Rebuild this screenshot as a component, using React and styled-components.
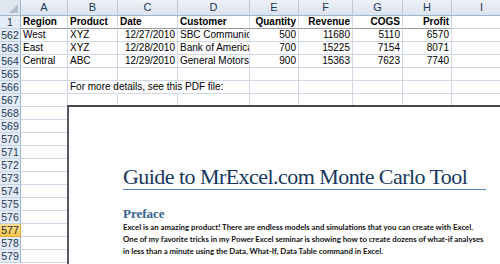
import React from 'react';
import styled, { createGlobalStyle, css } from 'styled-components';

const GlobalStyle = createGlobalStyle`
  html, body {
    margin: 0;
    padding: 0;
    background: #ffffff;
    overflow: hidden;
  }
`;

const Sheet = styled.div`
  position: relative;
  width: 500px;
  height: 264px;
  overflow: hidden;
  font-family: 'Liberation Sans', Arial, sans-serif;
  background: #ffffff;
`;

const Grid = styled.div`
  display: grid;
  grid-template-columns: 21px 47px 50px 60px 72px 49px 54px 50px 49px 60px;
  grid-template-rows: 16px repeat(19, 13px);
`;

const Corner = styled.div`
  position: relative;
  box-sizing: border-box;
  background: #dfe6ef;
  border-right: 1px solid #9eb6ce;
  border-bottom: 1px solid #9eb6ce;

  &::after {
    content: '';
    position: absolute;
    right: 2px;
    bottom: 2px;
    border-left: 9px solid transparent;
    border-bottom: 9px solid #b6c1cf;
  }
`;

const ColHeader = styled.div`
  box-sizing: border-box;
  background: linear-gradient(#eef2f7, #dbe3ee);
  border-right: 1px solid #b8c8da;
  border-bottom: 1px solid #9eb6ce;
  color: #1f3756;
  font-size: 11px;
  line-height: 15px;
  text-align: center;
`;

const RowHeader = styled.div`
  box-sizing: border-box;
  background: #e4ecf7;
  border-right: 1px solid #9eb6ce;
  border-bottom: 1px solid #c5d3e3;
  color: #1f3756;
  font-size: 10.5px;
  line-height: 12px;
  text-align: center;

  ${(p) =>
    p.$active &&
    css`
      background: linear-gradient(#fbe29a, #f6c54a);
      border-right: 1px solid #e0a83a;
      border-bottom: 1px solid #e0a83a;
      color: #2a2a2a;
    `}
`;

const Cell = styled.div`
  box-sizing: border-box;
  padding: 0 2px;
  font-size: 10px;
  line-height: 12px;
  color: #000000;
  white-space: nowrap;
  overflow: ${(p) => (p.$spill ? 'visible' : 'hidden')};
  text-align: ${(p) => (p.$right ? 'right' : 'left')};
  font-weight: ${(p) => (p.$bold ? 'bold' : 'normal')};
  border-right: 1px solid ${(p) => (p.$noRight ? 'transparent' : '#d0d7e5')};
  border-bottom: 1px solid ${(p) => (p.$heavy ? '#9a9a9a' : '#d0d7e5')};
`;

const PdfFrame = styled.div`
  position: absolute;
  left: 67px;
  top: 105px;
  right: -20px;
  bottom: -20px;
  background: #ffffff;
  border-left: 2px solid #555a60;
  border-top: 2px solid #44484d;
  padding: 57px 0 0 54px;
`;

const Title = styled.div`
  width: 363px;
  white-space: nowrap;
  font-family: 'Liberation Serif', 'DejaVu Serif', serif;
  font-size: 22px;
  letter-spacing: -0.55px;
  line-height: 25px;
  color: #17365d;
  border-bottom: 1.5px solid #4f81bd;
`;

const Heading = styled.div`
  margin-top: 16px;
  font-family: 'Liberation Serif', 'DejaVu Serif', serif;
  font-weight: bold;
  font-size: 13px;
  line-height: 15px;
  color: #365f91;
`;

const Body = styled.p`
  margin: 0;
  font-family: Lato, 'Liberation Sans', sans-serif;
  font-weight: bold;
  font-size: 7.8px;
  line-height: 12px;
  color: #111111;
  white-space: nowrap;
`;

const cols = ['A', 'B', 'C', 'D', 'E', 'F', 'G', 'H', 'I'];

const header = [
  ['Region', false],
  ['Product', false],
  ['Date', false],
  ['Customer', false],
  ['Quantity', true],
  ['Revenue', true],
  ['COGS', true],
  ['Profit', true],
  ['', false],
];

const data = [
  ['562', ['West', 'XYZ', '12/27/2010', 'SBC Communications', '500', '11680', '5110', '6570']],
  ['563', ['East', 'XYZ', '12/28/2010', 'Bank of America', '700', '15225', '7154', '8071']],
  ['564', ['Central', 'ABC', '12/29/2010', 'General Motors', '900', '15363', '7623', '7740']],
];

const rightCols = [2, 4, 5, 6, 7];

const emptyRows = ['565', '566', '567', '568', '569', '570', '571', '572', '573', '574', '575', '576', '577', '578', '579'];

export default function App() {
  return (
    <Sheet>
      <GlobalStyle />
      <Grid>
        <Corner />
        {cols.map((c) => (
          <ColHeader key={c}>{c}</ColHeader>
        ))}

        <RowHeader>1</RowHeader>
        {header.map(([label, right], i) => (
          <Cell key={'h' + i} $bold $right={right} $heavy={i < 8}>
            {label}
          </Cell>
        ))}

        {data.map(([num, values]) => (
          <React.Fragment key={num}>
            <RowHeader>{num}</RowHeader>
            {values.map((v, i) => (
              <Cell key={i} $right={rightCols.includes(i)}>
                {v}
              </Cell>
            ))}
            <Cell />
          </React.Fragment>
        ))}

        {emptyRows.map((num) => (
          <React.Fragment key={num}>
            <RowHeader $active={num === '577'}>{num}</RowHeader>
            {cols.map((c) =>
              num === '566' && c === 'B' ? (
                <Cell key={c} $spill $noRight>
                  For more details, see this PDF file:
                </Cell>
              ) : (
                <Cell key={c} $noRight={num === '566' && c === 'C'} />
              )
            )}
          </React.Fragment>
        ))}
      </Grid>

      <PdfFrame>
        <Title>Guide to MrExcel.com Monte Carlo Tool</Title>
        <Heading>Preface</Heading>
        <Body>Excel is an amazing product! There are endless models and simulations that you can create with Excel.</Body>
        <Body>One of my favorite tricks in my Power Excel seminar is showing how to create dozens of what-if analyses</Body>
        <Body>in less than a minute using the Data, What-If, Data Table command in Excel.</Body>
      </PdfFrame>
    </Sheet>
  );
}
